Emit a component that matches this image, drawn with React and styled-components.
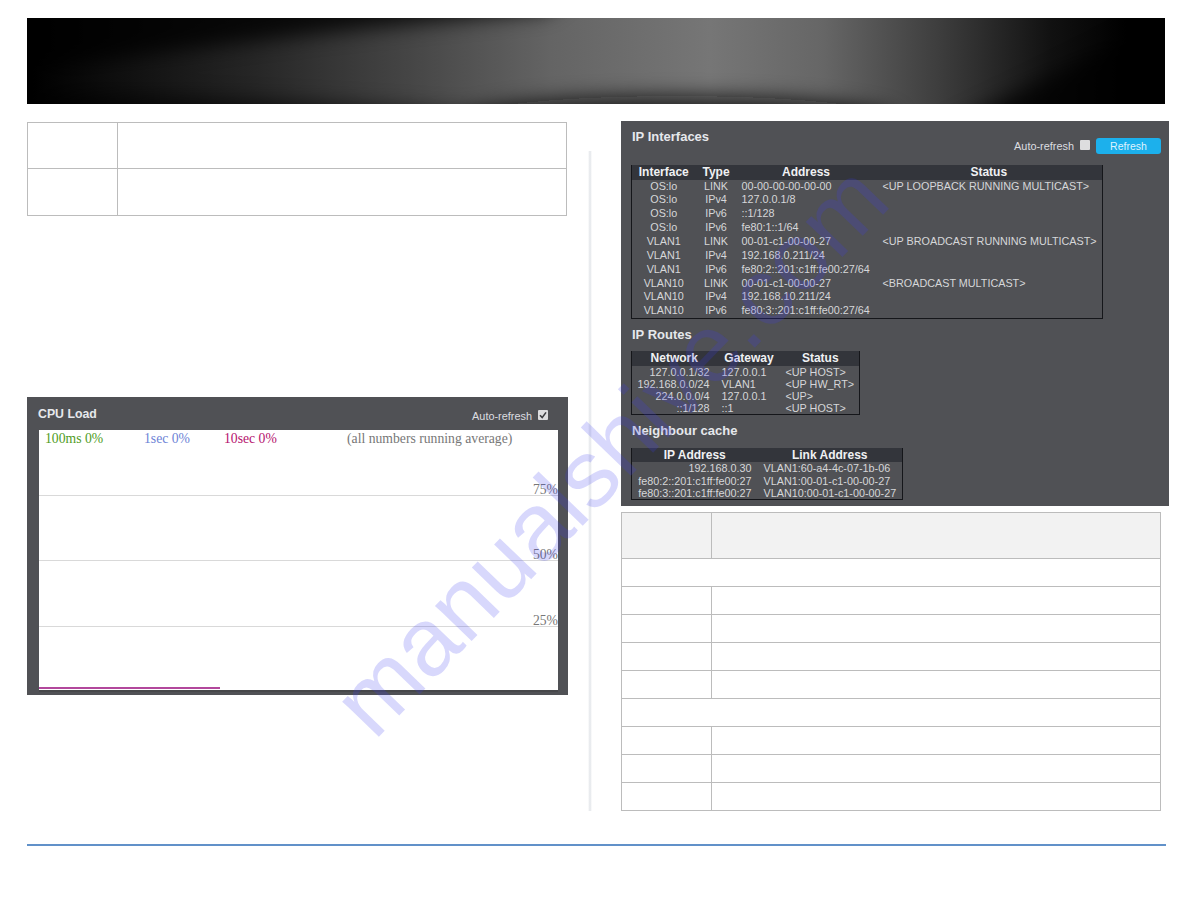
import React from "react";
import styled, { createGlobalStyle } from "styled-components";

const GlobalStyle = createGlobalStyle`
  html, body {
    margin: 0;
    background: #fff;
    font-family: "Liberation Sans", Arial, sans-serif;
  }
`;

const Page = styled.div`
  position: relative;
  width: 1188px;
  height: 918px;
  overflow: hidden;
  padding: 18px 0 0 27px;
  box-sizing: border-box;
`;

const BannerArt = styled.svg`
  display: block;
  width: 1138px;
  height: 86px;
`;

const Columns = styled.div`
  display: flex;
  margin-top: 17px;
`;

const LeftColumn = styled.div`
  width: 541px;
  padding-top: 1px;
`;

// faint vertical shade between the two pages of the manual
const Divider = styled.div`
  width: 4px;
  height: 660px;
  margin: 30px 29px 0 20px;
  background: linear-gradient(90deg, transparent, #e2e5e9, transparent);
`;

const RightColumn = styled.div`
  width: 548px;
`;

/* blank description tables */
const SpecTable = styled.table`
  width: ${(props) => props.$w}px;
  border-collapse: collapse;
  table-layout: fixed;
  margin-top: ${(props) => props.$top || 0}px;
`;

const SpecCol = styled.col`
  width: ${(props) => props.$w}px;
`;

const SpecCell = styled.td`
  height: ${(props) => props.$h}px;
  padding: 0;
  border: 1px solid #bcbcbc;
  background: ${(props) => (props.$head ? "#f2f2f2" : "#fff")};
`;

const DarkPanel = styled.section`
  background: #505155;
  color: #d6d7d9;
`;

const CpuPanel = styled(DarkPanel)`
  width: 541px;
  height: 298px;
  margin-top: 181px;
  padding: 0 9px 0 12px;
  box-sizing: border-box;
`;

const CpuHead = styled.div`
  display: flex;
  justify-content: space-between;
  height: 33px;
  padding-right: 11px;
`;

const PanelTitle = styled.h2`
  margin: ${(props) => props.$top || 0}px 0 ${(props) => props.$bottom || 0}px ${(props) => props.$left ?? 1}px;
  height: 16px;
  font-size: ${(props) => props.$size || 13}px;
  line-height: 16px;
  font-weight: bold;
  color: #e6e8ec;
`;

const Controls = styled.div`
  display: flex;
  align-items: center;
  height: 16px;
  margin-top: ${(props) => props.$top}px;
`;

const ControlLabel = styled.span`
  font-size: 10.9px;
  color: #dcdde0;
`;

const CheckBox = styled.span`
  display: flex;
  align-items: center;
  justify-content: center;
  width: 10px;
  height: 10px;
  margin: -3px 0 0 6px;
  background: #dddddf;
  border-radius: 1px;
`;

const RefreshButton = styled.button`
  width: 65px;
  height: 16px;
  margin-left: 6px;
  padding: 0;
  border: none;
  border-radius: 3px;
  background: #1cb0ec;
  color: #dff3ff;
  font-family: inherit;
  font-size: 10.5px;
`;

const Chart = styled.div`
  width: 519px;
  height: 262px;
  background: #fff;
  border-bottom: 2px solid #46474a;
  box-sizing: border-box;
  font-family: "Liberation Serif", "Times New Roman", serif;
  font-size: 13.7px;
  color: #777;
`;

const Band = styled.div`
  display: flex;
  align-items: flex-end;
  justify-content: flex-end;
  height: ${(props) => props.$h}px;
  box-sizing: border-box;
  border-bottom: 1px solid #d9d9d9;
  line-height: 11px;
`;

const Legend = styled.div`
  display: flex;
  padding: 1px 0 0 6px;
  height: 17px;
  line-height: 16px;
`;

const LegendItem = styled.span`
  width: ${(props) => props.$w}px;
  color: ${(props) => props.$color};
`;

const LoadBand = styled.div`
  display: flex;
  align-items: flex-end;
  height: 62px;
`;

const LoadLine = styled.div`
  width: 181px;
  height: 2px;
  background: #b2479c;
`;

const IpPanel = styled(DarkPanel)`
  height: 385px;
  padding: 0 8px 0 10px;
`;

const IpHead = styled.div`
  display: flex;
  justify-content: space-between;
  height: 44px;
`;

const DataTable = styled.table`
  width: ${(props) => props.$w}px;
  border-collapse: collapse;
  table-layout: fixed;
  border: 1px solid #15161a;
  border-top: none;
  font-size: 10.8px;
  color: #d6d7d9;
`;

const DataCol = styled.col`
  width: ${(props) => props.$w}px;
`;

const DataHead = styled.th`
  height: 14.5px;
  padding: 0;
  background: #33353b;
  color: #f0f1f3;
  font-size: 12px;
  line-height: 14px;
  font-weight: bold;
  text-align: center;
`;

const DataCell = styled.td`
  height: ${(props) => props.$h}px;
  padding: ${(props) => (props.$align === "right" ? `0 ${props.$pad || 0}px 0 0` : `0 0 0 ${props.$pad || 0}px`)};
  line-height: ${(props) => props.$h}px;
  white-space: nowrap;
  text-align: ${(props) => props.$align || "left"};
`;

const Footer = styled.div`
  width: 1139px;
  height: 2px;
  margin-top: 33px;
  background: #6191c9;
`;

// diagonal site mark that lies over the whole page
const Watermark = styled.div`
  position: absolute;
  left: 610px;
  top: 450px;
  transform: translate(-50%, -50%) rotate(-46deg);
  font-size: 96px;
  line-height: 1;
  white-space: nowrap;
  color: rgba(60, 60, 240, 0.2);
  pointer-events: none;
`;

const interfaces = [
  ["OS:lo", "LINK", "00-00-00-00-00-00", "<UP LOOPBACK RUNNING MULTICAST>"],
  ["OS:lo", "IPv4", "127.0.0.1/8", ""],
  ["OS:lo", "IPv6", "::1/128", ""],
  ["OS:lo", "IPv6", "fe80:1::1/64", ""],
  ["VLAN1", "LINK", "00-01-c1-00-00-27", "<UP BROADCAST RUNNING MULTICAST>"],
  ["VLAN1", "IPv4", "192.168.0.211/24", ""],
  ["VLAN1", "IPv6", "fe80:2::201:c1ff:fe00:27/64", ""],
  ["VLAN10", "LINK", "00-01-c1-00-00-27", "<BROADCAST MULTICAST>"],
  ["VLAN10", "IPv4", "192.168.10.211/24", ""],
  ["VLAN10", "IPv6", "fe80:3::201:c1ff:fe00:27/64", ""],
];

const routes = [
  ["127.0.0.1/32", "127.0.0.1", "<UP HOST>"],
  ["192.168.0.0/24", "VLAN1", "<UP HW_RT>"],
  ["224.0.0.0/4", "127.0.0.1", "<UP>"],
  ["::1/128", "::1", "<UP HOST>"],
];

const neighbours = [
  ["192.168.0.30", "VLAN1:60-a4-4c-07-1b-06"],
  ["fe80:2::201:c1ff:fe00:27", "VLAN1:00-01-c1-00-00-27"],
  ["fe80:3::201:c1ff:fe00:27", "VLAN10:00-01-c1-00-00-27"],
];

// columns: [name, width, align, padding]
const interfaceCols = [
  ["Interface", 64, "center", 0],
  ["Type", 41, "center", 0],
  ["Address", 139, "left", 5],
  ["Status", 227, "left", 7],
];
const routeCols = [
  ["Network", 85, "right", 7],
  ["Gateway", 65, "left", 5],
  ["Status", 78, "left", 4],
];
const neighbourCols = [
  ["IP Address", 126, "right", 6],
  ["Link Address", 145, "left", 6],
];

const IpTable = ({ cols, rows, rowH }) => (
  <DataTable $w={cols.reduce((sum, col) => sum + col[1], 0)}>
    <colgroup>
      {cols.map((col) => (
        <DataCol key={col[0]} $w={col[1]} />
      ))}
    </colgroup>
    <thead>
      <tr>
        {cols.map((col) => (
          <DataHead key={col[0]}>{col[0]}</DataHead>
        ))}
      </tr>
    </thead>
    <tbody>
      {rows.map((row, i) => (
        <tr key={i}>
          {row.map((text, j) => (
            <DataCell key={j} $h={rowH} $align={cols[j][2]} $pad={cols[j][3]}>
              {text}
            </DataCell>
          ))}
        </tr>
      ))}
    </tbody>
  </DataTable>
);

const Spec = ({ w, first, rows, top }) => (
  <SpecTable $w={w} $top={top}>
    <colgroup>
      <SpecCol $w={first} />
      <SpecCol $w={w - first} />
    </colgroup>
    <tbody>
      {rows.map((row, i) => (
        <tr key={i}>
          {row.span ? (
            <SpecCell colSpan={2} $h={row.h} />
          ) : (
            <>
              <SpecCell $h={row.h} $head={row.head} />
              <SpecCell $h={row.h} $head={row.head} />
            </>
          )}
        </tr>
      ))}
    </tbody>
  </SpecTable>
);

const checkMark = (
  <svg width="8" height="8" viewBox="0 0 8 8">
    <path d="M1 4.2 3.2 6.6 7 1.4" fill="none" stroke="#3c3d40" strokeWidth="1.6" />
  </svg>
);

// the smoky grey swoosh of the page header
const Banner = () => (
  <BannerArt viewBox="0 0 1138 86" preserveAspectRatio="none">
    <defs>
      <linearGradient id="smoke" x1="0" x2="1" y1="0" y2="0">
        <stop offset="0" stopColor="#000" />
        <stop offset="0.06" stopColor="#0c0c0c" />
        <stop offset="0.2" stopColor="#262626" />
        <stop offset="0.33" stopColor="#444" />
        <stop offset="0.46" stopColor="#646464" />
        <stop offset="0.6" stopColor="#767676" />
        <stop offset="0.7" stopColor="#666" />
        <stop offset="0.8" stopColor="#3e3e3e" />
        <stop offset="0.9" stopColor="#111" />
        <stop offset="0.97" stopColor="#000" />
      </linearGradient>
      <filter id="soft" filterUnits="userSpaceOnUse" x="-100" y="-100" width="1340" height="290">
        <feGaussianBlur stdDeviation="10" />
      </filter>
    </defs>
    <rect width="1138" height="86" fill="url(#smoke)" />
    <g filter="url(#soft)">
      <path d="M-60 -40 L560 -40 L520 -6 C380 6 200 22 -60 62 Z" fill="#000" opacity="0.8" />
      <path d="M-60 130 L-60 70 C110 78 300 82 470 96 L470 130 Z" fill="#0a0a0a" opacity="0.6" />
      <ellipse cx="650" cy="102" rx="220" ry="24" fill="#101010" opacity="0.8" />
      <path d="M880 130 C960 84 1060 50 1200 -40 L1200 130 Z" fill="#000" opacity="0.75" />
    </g>
  </BannerArt>
);

const App = () => {
  return (
    <Page>
      <GlobalStyle />
      <Banner />
      <Columns>
        <LeftColumn>
          <Spec w={539} first={90} rows={[{ h: 45 }, { h: 46 }]} />
          <CpuPanel>
            <CpuHead>
              <PanelTitle $top={9} $size={12.3} $left={-1}>CPU Load</PanelTitle>
              <Controls $top={11}>
                <ControlLabel>Auto-refresh</ControlLabel>
                <CheckBox>{checkMark}</CheckBox>
              </Controls>
            </CpuHead>
            <Chart>
              <Legend>
                <LegendItem $w={99} $color="#4f9c1e">100ms 0%</LegendItem>
                <LegendItem $w={80} $color="#6d83d6">1sec 0%</LegendItem>
                <LegendItem $w={123} $color="#b5126e">10sec 0%</LegendItem>
                <LegendItem $w={180} $color="#777">(all numbers running average)</LegendItem>
              </Legend>
              <Band $h={48}>75%</Band>
              <Band $h={65}>50%</Band>
              <Band $h={66}>25%</Band>
              <LoadBand>
                <LoadLine />
              </LoadBand>
            </Chart>
          </CpuPanel>
        </LeftColumn>
        <Divider />
        <RightColumn>
          <IpPanel>
            <IpHead>
              <PanelTitle $top={8}>IP Interfaces</PanelTitle>
              <Controls $top={17}>
                <ControlLabel>Auto-refresh</ControlLabel>
                <CheckBox />
                <RefreshButton>Refresh</RefreshButton>
              </Controls>
            </IpHead>
            <IpTable cols={interfaceCols} rows={interfaces} rowH={13.86} />
            <PanelTitle $top={8} $bottom={8}>IP Routes</PanelTitle>
            <IpTable cols={routeCols} rows={routes} rowH={12.1} />
            <PanelTitle $top={8} $bottom={9}>Neighbour cache</PanelTitle>
            <IpTable cols={neighbourCols} rows={neighbours} rowH={12.2} />
          </IpPanel>
          <Spec
            w={539}
            first={90}
            top={6}
            rows={[
              { h: 45, head: true },
              { h: 27, span: true },
              { h: 27 },
              { h: 27 },
              { h: 27 },
              { h: 27 },
              { h: 27, span: true },
              { h: 27 },
              { h: 27 },
              { h: 27 },
            ]}
          />
        </RightColumn>
      </Columns>
      <Footer />
      <Watermark>manualshive.com</Watermark>
    </Page>
  );
};

export default App;
